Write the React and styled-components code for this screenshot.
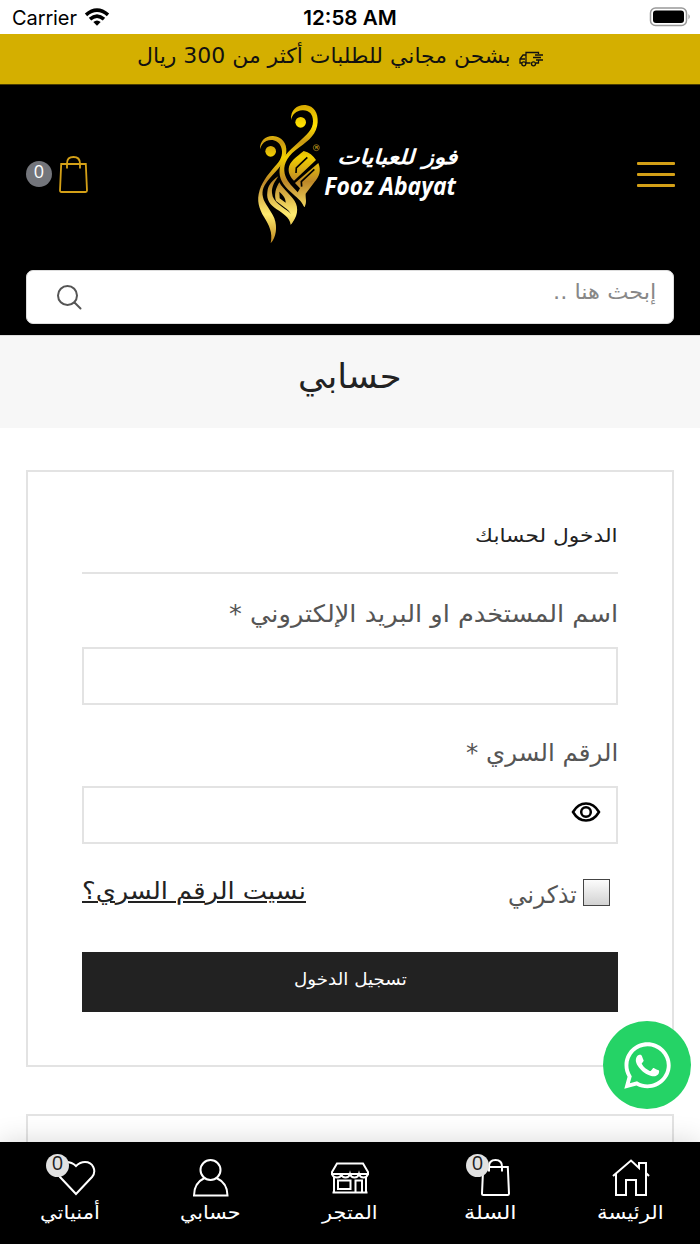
import React, { useLayoutEffect, useRef, useState } from "react";
import styled, { createGlobalStyle } from "styled-components";
import { FaWhatsapp } from "react-icons/fa";

const GlobalStyle = createGlobalStyle`
  * {
    box-sizing: border-box;
  }

  body {
    margin: 0;
    background: #fff;
    font-family: "DejaVu Sans", sans-serif;
    overflow: hidden;
  }
`;

const Page = styled.div`
  position: relative;
  width: 700px;
  height: 1244px;
  overflow: hidden;
  background: #fff;
`;

const StatusBar = styled.div`
  height: 34px;
  padding: 0 9px 0 12px;
  display: grid;
  grid-template-columns: 1fr auto 1fr;
  align-items: center;
  font-family: Inter, sans-serif;
  font-size: 20px;
  color: #000;
`;

const Carrier = styled.div`
  display: flex;
  align-items: center;
  gap: 7px;
  padding-top: 2px;
  letter-spacing: -0.1px;
`;

const Time = styled.div`
  margin-right: 3px;
  font-size: 20.6px;
  font-weight: 600;
  padding-top: 1px;
`;

const Battery = styled.svg`
  justify-self: end;
`;

const Promo = styled.div`
  height: 50px;
  background: #d4af00;
  display: flex;
  justify-content: center;
  align-items: flex-start;
  gap: 8px;
  padding: 8px 20px 0 0;
  color: #111;
`;

const TruckIcon = styled.svg`
  margin-top: 9px;
`;

const Header = styled.header`
  height: 251px;
  background: #000;
  border-top: 1px solid #4a3d00;
  padding: 10px 26px 0;
`;

const HeaderRow = styled.div`
  height: 175px;
  display: flex;
  align-items: flex-start;
  justify-content: space-between;
`;

const Burger = styled.div`
  width: 38px;
  margin: 67px -1px 0 0;
  display: flex;
  flex-direction: column;
  gap: 8px;

  span {
    height: 3px;
    border-radius: 1px;
    background: #d4a017;
  }
`;

const CartLink = styled.div`
  display: flex;
  direction: ltr;
  gap: 6px;
  padding: 59px 1px 0 0;
`;

const CartCount = styled.div`
  width: 26px;
  height: 26px;
  margin-top: 7px;
  border-radius: 50%;
  background: #73757b;
  color: #fff;
  font: 18px/21px "Open Sans", sans-serif;
  text-align: center;
`;

const Logo = styled.svg`
  margin-left: -18px;
`;

const SearchBox = styled.div`
  height: 54px;
  border: 1px solid #ddd;
  border-radius: 7px;
  background: #fff;
  display: flex;
  justify-content: space-between;
  align-items: flex-start;
  padding: 7px 17px 0 29px;
  color: #888;

  svg {
    margin-top: 6px;
  }
`;

const TitleBar = styled.div`
  height: 93px;
  background: #f7f7f7;
  border-top: 1px solid #ddd;
  display: flex;
  justify-content: center;
  padding-top: 17px;
  color: #222;
`;

const Content = styled.main`
  padding: 42px 26px 0;
`;

const Card = styled.section`
  height: 597px;
  margin-bottom: 47px;
  border: 2px solid #e3e3e3;
  padding: 44px 54px 0;
  color: #555;
`;

const CardHeading = styled.h2`
  height: 58px;
  margin: 0;
  padding-top: 4px;
  border-bottom: 2px solid #e3e3e3;
  font-weight: 400;
  color: #222;
`;

const Field = styled.label`
  display: block;
  margin-top: ${({ $gap }) => $gap}px;
`;

const FieldLabel = styled.div`
  height: 50px;
  padding-top: 1px;
`;

const Input = styled.div`
  height: 58px;
  border: 2px solid #e3e3e3;
  display: flex;
  align-items: flex-start;
  padding: 9px 15px;
`;

const Options = styled.div`
  height: 108px;
  padding-top: 31px;
  display: flex;
  justify-content: space-between;
  align-items: flex-start;
`;

const Remember = styled.div`
  display: flex;
  gap: 6px;
  padding-right: 8px;
`;

const Checkbox = styled.span`
  width: 27px;
  height: 27px;
  margin-top: 4px;
  border: 1px solid #444;
  background: linear-gradient(#fcfcfc, #d2d2d2);
`;

const RememberText = styled.div`
  padding-top: 4px;
`;

const Forgot = styled.a`
  height: 33px;
  color: #222;
  text-decoration: underline;
  text-decoration-thickness: 2px;
  text-underline-offset: 2px;
`;

const Submit = styled.button`
  width: 100%;
  height: 60px;
  border: 0;
  padding: 0 0 4px;
  background: #222;
  color: #fff;
  display: flex;
  align-items: center;
  justify-content: center;
  font-family: inherit;
`;

const WhatsApp = styled.div`
  position: absolute;
  left: 603px;
  top: 1021px;
  width: 88px;
  height: 88px;
  border-radius: 50%;
  background: #25d366;
  color: #fff;
  display: flex;
  align-items: center;
  justify-content: center;
`;

const BottomNav = styled.nav`
  position: absolute;
  left: 0;
  right: 0;
  bottom: 0;
  height: 102px;
  background: #000;
  box-shadow: 0 0 26px rgba(0, 0, 0, 0.16);
  display: grid;
  grid-template-columns: repeat(5, 140px);
  color: #fff;
`;

const NavItem = styled.div`
  position: relative;
  display: flex;
  flex-direction: column;
  align-items: center;
  padding-top: 15px;
`;

const NavIcon = styled.svg`
  height: 42px;
  margin-left: ${({ $shift }) => $shift || 0}px;
`;

const NavBadge = styled.span`
  position: absolute;
  right: ${({ $right }) => $right}px;
  top: 12px;
  width: 23px;
  height: 23px;
  border-radius: 50%;
  background: #e1e1e1;
  color: #222;
  font: 20px/17px "Open Sans", sans-serif;
  text-align: center;
`;

const TextBox = styled.span`
  display: inline-block;
  width: ${({ $width }) => $width}px;
  font-size: ${({ $size }) => $size}px;
  line-height: 1.4;
  text-align: right;
  text-decoration: inherit;
  direction: rtl;
`;

const TextLine = styled.span`
  display: inline-block;
  white-space: nowrap;
  transform-origin: 100% 50%;
  text-decoration: inherit;
`;

// Scales a line of text horizontally so that it fills its column
const FitText = ({ width, size, children }) => {
  const ref = useRef(null);
  const [scale, setScale] = useState(1);

  useLayoutEffect(() => {
    setScale(width / ref.current.offsetWidth);
  }, [width, children]);

  return (
    <TextBox $width={width} $size={size}>
      <TextLine ref={ref} style={{ transform: `scaleX(${scale})` }}>
        {children}
      </TextLine>
    </TextBox>
  );
};

const BagShape = () => (
  <>
    <path d="M3.200 10H27.800L29 36.500Q29 38 27.500 38H3.500Q2 38 2 36.500Z" />
    <path d="M9 14.500V9.500Q9 3 15.500 3T22 9.500V14.500" />
  </>
);

const NAV_ITEMS = [
  {
    label: "الرئيسة",
    width: 67,
    icon: (
      <NavIcon width="40" viewBox="0 0 40 42" fill="none" stroke="#fff" strokeWidth="2" $shift={2}>
        <path d="M2 19 20 3.500 28 11V6H35V16L38 19M5 17V38H15V23H25V38H35V16" />
      </NavIcon>
    ),
  },
  {
    label: "السلة",
    width: 53,
    badge: 71,
    icon: (
      <NavIcon width="31" viewBox="0 0 31 42" fill="none" stroke="#fff" strokeWidth="2" $shift={10}>
        <BagShape />
      </NavIcon>
    ),
  },
  {
    label: "المتجر",
    width: 56,
    icon: (
      <NavIcon width="40" viewBox="0 0 40 42" fill="none" stroke="#fff" strokeWidth="2">
        <path d="M7 6.500H33L38 15V17H2V15ZM2 17Q3 20.500 7 20.500T11 17Q12 20.500 15.500 20.500T20 17Q21 20.500 24.500 20.500T29 17Q30 20.500 33.500 20.500T38 17" />
        <path d="M4 20V35M36 20V35M2.500 35.500H37.500M8 23.500H20.500V32H8ZM25.500 35V23.500H32V35" />
      </NavIcon>
    ),
  },
  {
    label: "حسابي",
    width: 61,
    icon: (
      <NavIcon width="40" viewBox="0 0 40 42" fill="none" stroke="#fff" strokeWidth="2">
        <circle cx="20.500" cy="13" r="10" />
        <path d="M14.500 21Q4 26 4 38.500H37.500Q37.500 26 26.500 21" />
      </NavIcon>
    ),
  },
  {
    label: "أمنياتي",
    width: 60,
    badge: 71,
    icon: (
      <NavIcon width="40" viewBox="0 0 40 42" fill="none" stroke="#fff" strokeWidth="2" $shift={12}>
        <path d="M20 37 4 20C-1 14 2 5 10 5Q16 5 20 9Q24 5 29 5C37 5 41 14 36 20Z" />
      </NavIcon>
    ),
  },
];

const App = () => {
  return (
    <Page dir="rtl">
      <GlobalStyle />

      <StatusBar dir="ltr">
        <Carrier>
          Carrier
          <svg width="26" height="20" viewBox="0 0 26 20" fill="none" stroke="#000" strokeWidth="3.600">
            <path d="M2 6.800Q13-2.500 24 6.800M6 11.200Q13 5 20 11.200" />
            <path d="M9.300 14Q13 11 16.700 14L13 17.700Z" fill="#000" stroke="none" />
          </svg>
        </Carrier>
        <Time>12:58 AM</Time>
        <Battery width="42" height="20" viewBox="0 0 42 20">
          <rect x="1.500" y="1" width="36" height="17.500" rx="5" fill="none" stroke="#999" strokeWidth="1.500" />
          <rect x="4" y="3.500" width="31" height="12.500" rx="3" />
          <path d="M39.500 7Q42 9.500 39.500 12.500Z" fill="#999" />
        </Battery>
      </StatusBar>

      <Promo>
        <TruckIcon width="25" height="16" viewBox="0 0 25 16" fill="none" stroke="#111" strokeWidth="1.300">
          <path d="M7 12H11.500M17 12H19.500V9M3 12H1V8L4 4H7V12M7 9V1.500H19.500V3M1.500 8H6M16 4H24M14 6.500H22M17 9H24" />
          <circle cx="4.800" cy="12.800" r="2" />
          <circle cx="14.500" cy="12.800" r="2" />
        </TruckIcon>
        <FitText width={374} size={21}>بشحن مجاني للطلبات أكثر من 300 ريال</FitText>
      </Promo>

      <Header>
        <HeaderRow>
          <Burger>
            <span />
            <span />
            <span />
          </Burger>

          <Logo width="230" height="155" viewBox="0 0 690 465" direction="ltr">
            <defs>
              <linearGradient id="gold" gradientUnits="userSpaceOnUse" x1="0" y1="30" x2="0" y2="440">
                <stop offset="0" stopColor="#d6a800" />
                <stop offset="0.150" stopColor="#ffe100" />
                <stop offset="0.270" stopColor="#c99813" />
                <stop offset="0.380" stopColor="#f2d000" />
                <stop offset="0.560" stopColor="#bd8727" />
                <stop offset="0.800" stopColor="#ffec70" />
                <stop offset="1" stopColor="#c28b20" />
              </linearGradient>
            </defs>
            <g fill="url(#gold)">
              <circle cx="182" cy="82" r="16" />
              <circle cx="92" cy="169" r="16" />
              <path d="M153 75C151 42 174 28 197 30C222 33 235 54 233 82C231 116 207 137 178 157C145 180 131 204 133 228C135 250 147 264 164 282C188 307 200 316 193 337C183 315 169 307 153 292C128 269 116 250 119 222C122 189 145 169 174 143C201 119 219 104 219 79C219 57 207 45 187 46C168 47 157 59 153 75Z" />
              <path d="M60 163C59 137 77 122 99 123C126 125 141 145 139 170C137 202 111 224 90 249C72 270 64 285 69 307C73 326 93 346 103 370C113 398 108 428 92 445C99 412 87 391 72 366C57 341 49 317 59 285C68 256 92 229 111 207C125 191 130 173 123 155C116 137 96 130 79 138C68 143 63 153 60 163Z" />
              <path d="M115 244C106 258 94 274 96 294C98 323 130 336 151 354C163 366 163 378 152 389C149 368 130 356 110 343C90 330 79 314 82 292C84 269 97 257 115 244Z" />
              <path d="M118 262C130 284 151 298 164 318C177 339 173 367 152 389C159 368 155 354 140 342L108 318C102 298 107 280 118 262ZM118 290L119 310L137 323C137 309 129 300 118 290Z" fillRule="evenodd" />
              {/* leaf with its diagonal slits left open */}
              <path d="M191 168C207 172 220 182 228 195L162 257C152 247 145 235 146 221C148 200 168 187 191 168Z" />
              <path d="M235 204C244 226 239 244 223 262L197 296C196 312 202 320 193 337C188 316 180 303 172 294L180 280L165 264Z" />
            </g>
            <path d="M202 187 169 219 168 234M223 223 184 260 185 275" fill="none" stroke="#000" strokeWidth="5" />
            <circle cx="229" cy="158" r="9" fill="none" stroke="#c4951c" strokeWidth="2" />
            <text x="225" y="163" fontSize="13" fontFamily="Liberation Sans" fontWeight="700" fill="#d4a51c">R</text>
            <g fill="#fff">
              <text x="292" y="207" fontSize="61" fontFamily="DejaVu Sans" fontWeight="700" fontStyle="italic" textLength="360" lengthAdjust="spacingAndGlyphs">فوز للعبايات</text>
              <text x="253" y="300" fontSize="76" fontFamily="Open Sans" fontWeight="700" fontStyle="italic" textLength="395" lengthAdjust="spacingAndGlyphs">Fooz Abayat</text>
            </g>
          </Logo>

          <CartLink>
            <CartCount>0</CartCount>
            <svg width="31" height="40" viewBox="0 0 31 40" fill="none" stroke="#d4a017" strokeWidth="1.800">
              <BagShape />
            </svg>
          </CartLink>
        </HeaderRow>

        <SearchBox dir="ltr">
          <svg width="28" height="28" viewBox="0 0 28 28" fill="none" stroke="#555" strokeWidth="2" strokeLinecap="round">
            <circle cx="11.500" cy="11.500" r="9.500" />
            <path d="M18.500 18.500 24.500 24.500" />
          </svg>
          <FitText width={103} size={21}>إبحث هنا ..</FitText>
        </SearchBox>
      </Header>

      <TitleBar>
        <FitText width={104} size={34}>حسابي</FitText>
      </TitleBar>

      <Content>
        <Card>
          <CardHeading>
            <FitText width={143} size={19}>الدخول لحسابك</FitText>
          </CardHeading>

          <Field $gap={23}>
            <FieldLabel>
              <FitText width={389} size={24}>اسم المستخدم او البريد الإلكتروني *</FitText>
            </FieldLabel>
            <Input />
          </Field>

          <Field $gap={31}>
            <FieldLabel>
              <FitText width={152} size={24}>الرقم السري *</FitText>
            </FieldLabel>
            <Input>
              <svg width="30" height="30" viewBox="0 0 30 30" fill="none" stroke="#000" strokeWidth="2.500">
                <path d="M2 15Q7 6.500 15 6.500T28 15Q23 23.500 15 23.500T2 15Z" />
                <circle cx="15" cy="15" r="4.800" />
              </svg>
            </Input>
          </Field>

          <Options>
            <Remember>
              <Checkbox />
              <RememberText>
                <FitText width={69} size={24}>تذكرني</FitText>
              </RememberText>
            </Remember>
            <Forgot>
              <FitText width={224} size={24}>نسيت الرقم السري؟</FitText>
            </Forgot>
          </Options>

          <Submit>
            <FitText width={113} size={17}>تسجيل الدخول</FitText>
          </Submit>
        </Card>

        <Card />
      </Content>

      <WhatsApp>
        <FaWhatsapp size={53} />
      </WhatsApp>

      <BottomNav>
        {NAV_ITEMS.map((item) => (
          <NavItem key={item.label}>
            {item.icon}
            <FitText width={item.width} size={19}>{item.label}</FitText>
            {item.badge && <NavBadge $right={item.badge}>0</NavBadge>}
          </NavItem>
        ))}
      </BottomNav>
    </Page>
  );
};

export default App;
